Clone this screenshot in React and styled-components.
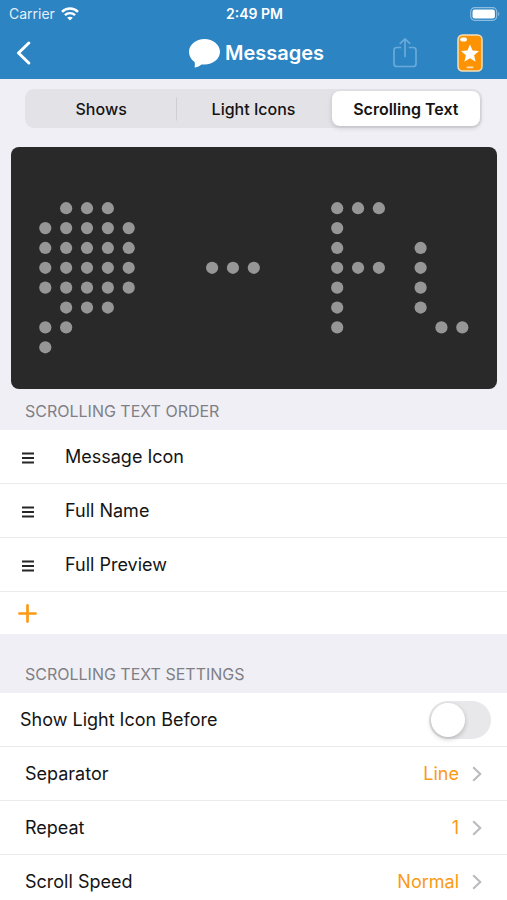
import React, { useState } from 'react'
import styled, { createGlobalStyle } from 'styled-components';

const GlobalStyle = createGlobalStyle`
*{
  box-sizing: border-box;
}
body{
  margin: 0;
  background: #f0eff5;
  color: #141414;
  font-family: Inter, "Liberation Sans", sans-serif;
  font-size: 18px;
  line-height: 24px;
}
button{
  margin: 0;
  padding: 0;
  border: 0;
  background: none;
  color: inherit;
  font: inherit;
  cursor: pointer;
}
svg{
  display: block;
}
`

const Screen = styled.div`
min-height: 100vh;
overflow: hidden;
`

const Header = styled.header`
background: #2c84c3;
color: #fff;
`

const StatusBar = styled.div`
display: grid;
grid-template-columns: 1fr auto 1fr;
align-items: center;
height: 27px;
padding: 0 7px 0 9px;
font-size: 14px;
line-height: 20px;
`

const Carrier = styled.div`
display: flex;
align-items: center;
gap: 6px;
color: #e4eff8;
`

const Time = styled.div`
font-weight: 600;
`

const Battery = styled.div`
justify-self: end;
`

const NavBar = styled.nav`
display: grid;
grid-template-columns: 1fr auto 1fr;
align-items: center;
height: 52px;
padding: 0 10px 0 16px;
`

const Title = styled.h1`
display: flex;
align-items: center;
gap: 5px;
margin: 0;
font-size: 20px;
font-weight: 600;
line-height: 24px;
`

const BackButton = styled.button`
justify-self: start;
`

const Actions = styled.div`
display: flex;
align-items: center;
justify-content: flex-end;
gap: 40px;
padding-right: 14px;
`

const Segments = styled.div`
display: grid;
grid-template-columns: repeat(3, 1fr);
margin: 10px 25px 19px;
padding: 2px 0;
border-radius: 9px;
background: #e3e2e7;
`

const Segment = styled.button`
height: 35px;
margin: ${props => props.$active ? '0 2px' : '0'};
border-radius: 8px;
font-size: 16px;
font-weight: ${props => props.$active ? 600 : 500};
background: ${props => props.$active ? '#fff' : 'transparent'};
box-shadow: ${props => props.$active ? '0 2px 5px rgba(0, 0, 0, 0.16)' : 'none'};

&.divided{
  background: linear-gradient(#cfced4, #cfced4) right center / 1px 24px no-repeat;
}
`

const LightPanel = styled.div`
margin: 0 10px 0 11px;
border-radius: 8px;
background: #292929;
overflow: hidden;

svg{
  width: 100%;
}
`

const SectionTitle = styled.h2`
margin: 0;
padding: ${props => props.$spaced ? '28px 25px 7px' : '10px 25px 7px'};
color: #7f7f85;
font-size: 16px;
font-weight: 400;
line-height: 24px;
`

const List = styled.ul`
margin: 0;
padding: 0;
list-style: none;
background: #fff;
`

const Item = styled.li`
display: flex;
align-items: center;
height: ${props => props.$short ? '42px' : '54px'};
border-bottom: ${props => props.$short ? '0' : '1px solid #ebebee'};
`

const Handle = styled.button`
padding: 3px 0 0 21px;
`

const ItemName = styled.span`
padding-left: 30px;
`

const AddButton = styled.button`
padding-left: 18px;
`

const OptionButton = styled.button`
display: flex;
align-items: center;
width: 100%;
height: 100%;
padding: 0 25px;
text-align: left;
`

const OptionValue = styled.span`
margin-left: auto;
padding-right: 13px;
color: #fb9a16;
`

const ToggleLabel = styled.label`
display: flex;
align-items: center;
justify-content: space-between;
width: 100%;
padding: 0 16px 0 20px;
`

const Toggle = styled.input`
appearance: none;
display: flex;
align-items: center;
width: 62px;
height: 38px;
margin: 0;
padding: 2px;
border-radius: 19px;
background: #e8e8ea;
cursor: pointer;

&:checked{
  justify-content: flex-end;
  background: #fb9a16;
}

&:before{
  content: "";
  width: 34px;
  height: 34px;
  border-radius: 50%;
  background: #fff;
  box-shadow: 0 2px 5px rgba(0, 0, 0, 0.22);
}
`

const tabs = ['Shows', 'Light Icons', 'Scrolling Text']

const order = ['Message Icon', 'Full Name', 'Full Preview']

const options = [
  { name: 'Separator', value: 'Line' },
  { name: 'Repeat', value: '1' },
  { name: 'Scroll Speed', value: 'Normal' },
]

const lights = [
  '.ooo..........ooo....',
  'ooooo.........o......',
  'ooooo.........o...o..',
  'ooooo...ooo...ooo.o..',
  'ooooo.........o...o..',
  '.ooo..........o...o..',
  'oo............o....oo',
  'o....................',
]

const WifiIcon = () => (
  <svg width="18" height="14" viewBox="0 0 18 14" fill="none" stroke="#fff" strokeWidth="2.4" aria-hidden="true">
    <path d="M1 4.8C5.5.4 12.5.4 17 4.8" />
    <path d="M3.9 8.1c2.9-2.7 7.3-2.7 10.2 0" />
    <path d="M9 13.6 6.2 10.7c1.6-1.4 4-1.4 5.6 0z" fill="#fff" stroke="none" />
  </svg>
)

const BatteryIcon = () => (
  <svg width="30" height="14" viewBox="0 0 30 14" aria-hidden="true">
    <rect x=".7" y=".7" width="26" height="12.6" rx="4" fill="none" stroke="#8dbde0" strokeWidth="1.2" />
    <rect x="2.5" y="2.5" width="22.4" height="9" rx="2.2" fill="#fff" />
    <path d="M28.2 5v4c1.6-.6 1.6-3.4 0-4z" fill="#8dbde0" />
  </svg>
)

const BackIcon = () => (
  <svg width="15" height="24" viewBox="0 0 15 24" fill="none" stroke="#fff" strokeWidth="3" strokeLinecap="round" strokeLinejoin="round" aria-hidden="true">
    <path d="M12.8 2 2.5 12l10.3 10" />
  </svg>
)

const BubbleIcon = () => (
  <svg width="31" height="30" viewBox="0 0 31 30" fill="#fff" aria-hidden="true">
    <path d="M15.5 1C24 1 31 6.7 31 13.8S24 26.6 15.5 26.6c-1 0-2-.1-3-.2-1.9 1.6-4 2.6-6.1 3-.7.1-.9-.4-.7-1 .3-1.3.3-2.9-.1-4.4C2 21.6 0 18 0 13.8 0 6.7 7 1 15.5 1z" />
  </svg>
)

const ShareIcon = () => (
  <svg width="24" height="30" viewBox="0 0 24 30" fill="none" stroke="#6aaad9" strokeWidth="1.7" strokeLinecap="round" strokeLinejoin="round" aria-hidden="true">
    <path d="M7.5 9.5H3.8A2.8 2.8 0 0 0 1 12.3v13.4a2.8 2.8 0 0 0 2.8 2.8h16.4a2.8 2.8 0 0 0 2.8-2.8V12.3a2.8 2.8 0 0 0-2.8-2.8h-3.7" />
    <path d="M12 18.500V1M7.3 5.4 12 .9l4.7 4.5" />
  </svg>
)

const PhoneIcon = () => (
  <svg width="26" height="38" viewBox="0 0 26 38" aria-hidden="true">
    <rect x="1" y="1" width="24" height="36" rx="4.5" fill="#fd9203" stroke="#f5dfb8" strokeWidth="1.5" />
    <rect x="3.2" y="3.5" width="6.8" height="4" rx="2" fill="#fff" />
    <path d="m13 10.5 2.6 6 6.4.6-4.9 4.2 1.5 6.4-5.6-3.4-5.600 3.400 1.500-6.400L4 17.100l6.400-.6z" fill="#fff" />
    <rect x="9.5" y="32.5" width="7" height="1.7" rx=".8" fill="#ffe0ae" />
  </svg>
)

const HandleIcon = () => (
  <svg width="14" height="12" viewBox="0 0 14 12" stroke="#262626" strokeWidth="2" aria-hidden="true">
    <path d="M1 1.5h12M1 6h12M1 10.5h12" />
  </svg>
)

const PlusIcon = () => (
  <svg width="19" height="19" viewBox="0 0 19 19" stroke="#fb9a16" strokeWidth="2.7" strokeLinecap="round" aria-hidden="true">
    <path d="M9.5 1.4v16.2M1.4 9.5h16.2" />
  </svg>
)

const ChevronIcon = () => (
  <svg width="10" height="16" viewBox="0 0 10 16" fill="none" stroke="#bcbcc0" strokeWidth="2.2" aria-hidden="true">
    <path d="m1.2 1.3 7 6.7-7 6.7" />
  </svg>
)

const Lights = () => (
  <svg viewBox="0 0 486 242" role="img" aria-label="Scrolling text preview">
    {lights.map((row, y) => row.split('').map((cell, x) => (
      cell === 'o' && <circle key={`${x}-${y}`} cx={34.3 + x * 20.85} cy={61.2 + y * 19.87} r="6.1" fill="#969696" />
    )))}
  </svg>
)

const App = () => {
  const [activeTab, setActiveTab] = useState(2)
  const [iconBefore, setIconBefore] = useState(false)

  return (
    <Screen>
      <GlobalStyle />
      <Header>
        <StatusBar>
          <Carrier>Carrier <WifiIcon /></Carrier>
          <Time>2:49 PM</Time>
          <Battery><BatteryIcon /></Battery>
        </StatusBar>
        <NavBar>
          <BackButton aria-label="Back"><BackIcon /></BackButton>
          <Title><BubbleIcon />Messages</Title>
          <Actions>
            <button aria-label="Share"><ShareIcon /></button>
            <button aria-label="Favorite"><PhoneIcon /></button>
          </Actions>
        </NavBar>
      </Header>

      <main>
        <Segments>
          {tabs.map((tab, i) => (
            <Segment
              key={tab}
              $active={activeTab === i}
              aria-pressed={activeTab === i}
              className={i < 2 && activeTab !== i && activeTab !== i + 1 ? 'divided' : ''}
              onClick={() => setActiveTab(i)}
            >
              {tab}
            </Segment>
          ))}
        </Segments>

        <LightPanel><Lights /></LightPanel>

        <SectionTitle>SCROLLING TEXT ORDER</SectionTitle>
        <List>
          {order.map(name => (
            <Item key={name}>
              <Handle aria-label={`Move ${name}`}><HandleIcon /></Handle>
              <ItemName>{name}</ItemName>
            </Item>
          ))}
          <Item $short>
            <AddButton aria-label="Add"><PlusIcon /></AddButton>
          </Item>
        </List>

        <SectionTitle $spaced>SCROLLING TEXT SETTINGS</SectionTitle>
        <List>
          <Item>
            <ToggleLabel>
              Show Light Icon Before
              <Toggle
                type="checkbox"
                role="switch"
                checked={iconBefore}
                onChange={() => setIconBefore(!iconBefore)}
              />
            </ToggleLabel>
          </Item>
          {options.map(option => (
            <Item key={option.name}>
              <OptionButton>
                {option.name}
                <OptionValue>{option.value}</OptionValue>
                <ChevronIcon />
              </OptionButton>
            </Item>
          ))}
        </List>
      </main>
    </Screen>
  )
}

export default App
